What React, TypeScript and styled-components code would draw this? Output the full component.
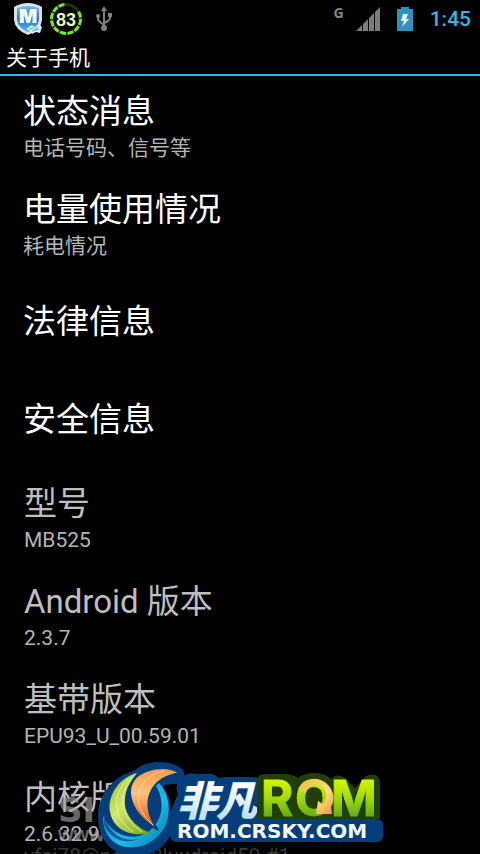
import React from 'react';
import styled, { createGlobalStyle } from 'styled-components';

const GlobalStyle = createGlobalStyle`
  *, *::before, *::after { box-sizing: border-box; }
  body {
    margin: 0;
    background: #000;
    font-family: Roboto, "Noto Sans CJK SC", sans-serif;
  }
`;

const Screen = styled.div`
  position: relative;
  display: flex;
  flex-direction: column;
  height: 100vh;
  overflow: hidden;
  background: #000;
  color: #fff;
`;

const StatusBar = styled.header`
  display: flex;
  flex: none;
  align-items: center;
  justify-content: space-between;
  height: 38px;
  padding: 0 9px 0 12px;
`;

const IconGroup = styled.div<{ $gap: number }>`
  display: flex;
  align-items: center;
  gap: ${({ $gap }) => $gap}px;
  svg { display: block; }
`;

const NetworkType = styled.span`
  height: 24px;
  color: #858585;
  font: 700 14px/12px "Open Sans", sans-serif;
`;

const Clock = styled.time`
  color: #33b5e5;
  font-size: 21px;
  font-weight: 500;
  line-height: 38px;
`;

const TitleBar = styled.h1`
  flex: none;
  height: 38px;
  margin: 0;
  padding: 0 6px;
  border-bottom: 2px solid #33b5e5;
  font-size: 21px;
  font-weight: 400;
  line-height: 40px;
`;

const List = styled.ul`
  margin: 0;
  padding: 0;
  list-style: none;
`;

const rowStyles = `
  display: flex;
  flex-direction: column;
  justify-content: center;
  width: 100%;
  min-height: 98px;
  border: 0;
  background: none;
  font-family: inherit;
  text-align: left;
`;

const ActionRow = styled.button`
  ${rowStyles}
  padding: 12px 23px 10px;
  color: #fff;
  cursor: pointer;
`;

const InfoRow = styled.div`
  ${rowStyles}
  padding: 12px 24px 10px;
  color: #bebebe;
`;

const RowTitle = styled.span`
  font-size: 33px;
  line-height: 48px;
  white-space: nowrap;
`;

const RowSummary = styled.span`
  height: 28px;
  color: #b4b4b4;
  font-size: 21px;
  line-height: 24px;
  white-space: nowrap;
`;

const KernelBuild = styled.span`
  display: block;
  color: #383838;
  line-height: 20px;
`;

const Watermark = styled.div`
  position: absolute;
  bottom: 10px;
  left: 58px;
  display: flex;
  flex-direction: column;
  color: rgba(165, 165, 165, 0.65);
  pointer-events: none;
`;

const WatermarkName = styled.span`
  font: 700 34px/28px "DejaVu Sans", sans-serif;
`;

const WatermarkSite = styled.span`
  font: 700 20px/20px "Liberation Sans", sans-serif;
`;

const Badge = styled.svg`
  position: absolute;
  bottom: 0;
  left: 94px;
  display: block;
  pointer-events: none;
`;

function ShieldIcon() {
  return (
    <svg width="32" height="34" viewBox="0 0 32 34" aria-hidden="true">
      <defs>
        <linearGradient id="shield" x1="0" y1="0" x2="0" y2="1">
          <stop offset="0" stopColor="#6db9ec" />
          <stop offset=".5" stopColor="#1f7fca" />
          <stop offset="1" stopColor="#55b2e6" />
        </linearGradient>
      </defs>
      <path d="M2 5Q9 1 16 1Q23 1 30 5V18Q29 28 16 33Q3 28 2 18Z" fill="#dce2e6" />
      <path d="M5 6Q16 2 27 6V18Q26 26 16 30Q6 26 5 18Z" fill="url(#shield)" />
      <text x="16" y="21" textAnchor="middle" fill="#fff" fontFamily="Inter" fontSize="19" fontWeight="900">M</text>
      <path d="M14 27L20 23L22 25L27 22L30 25L28 31L24 30L20 32L18 29Z" fill="#d7eefb" />
      <path d="M17 27L22 26M20 29L27 27M23 29L25 24" stroke="#56b3e0" strokeWidth="1" />
    </svg>
  );
}

function BatteryRing() {
  return (
    <svg width="34" height="34" viewBox="0 0 34 34" aria-label="83%">
      <g fill="none" strokeWidth="3">
        <circle cx="17" cy="17" r="14.5" stroke="#163809" />
        <circle
          cx="17" cy="17" r="14.5" stroke="#7be52b" pathLength="120"
          strokeDasharray="8 2 8 2 8 2 8 2 8 2 8 2 8 2 8 2 8 2 8 22"
          transform="rotate(-30 17 17)"
        />
      </g>
      <text x="17" y="24" textAnchor="middle" fill="#e2f5bd" fontFamily="Liberation Sans" fontSize="18" fontWeight="700">83</text>
    </svg>
  );
}

function UsbIcon() {
  return (
    <svg width="18" height="26" viewBox="0 0 18 26" aria-hidden="true">
      <g fill="none" stroke="#808080" strokeWidth="2">
        <path d="M9 3V22M3 10V13Q3 15 5 16L9 19M15 9V12Q15 14 13 15L9 17" />
      </g>
      <path d="M9 0L12 5H6Z" fill="#808080" />
      <circle cx="9" cy="22" r="3" fill="#808080" />
      <circle cx="3" cy="10" r="2" fill="#808080" />
      <rect x="13" y="7" width="4" height="4" fill="#808080" />
    </svg>
  );
}

function SignalIcon() {
  return (
    <svg width="24" height="24" viewBox="0 0 24 24" aria-hidden="true">
      <path d="M0 24L6 18V24ZM7 24V17L12 12V24ZM13 24V11L18 6V24ZM19 24V5L24 0V24Z" fill="#7d7d7d" />
    </svg>
  );
}

function ChargingIcon() {
  return (
    <svg width="16" height="24" viewBox="0 0 16 24" aria-hidden="true">
      <path d="M4 0H12V2H16V24H0V2H4Z" fill="#2d93bd" />
      <path d="M6 7H11L9 12H12L5 20L7 14H4Z" fill="#eef8fc" />
    </svg>
  );
}

function RomBadge() {
  return (
    <Badge width="292" height="94" viewBox="94 760 292 94" aria-label="ROM.CRSKY.COM">
      <defs>
        <linearGradient id="leaf" x1="0" y1="0" x2="1" y2="1">
          <stop offset="0" stopColor="#8eb51e" />
          <stop offset=".4" stopColor="#d6e86a" />
          <stop offset="1" stopColor="#6d9e12" />
        </linearGradient>
        <linearGradient id="flame" x1=".6" y1="0" x2=".6" y2="1">
          <stop offset="0" stopColor="#f39a45" />
          <stop offset=".4" stopColor="#ffc27c" />
          <stop offset="1" stopColor="#db4a07" />
        </linearGradient>
        <linearGradient id="sea" x1="0" y1="0" x2="1" y2="1">
          <stop offset="0" stopColor="#0876b8" />
          <stop offset=".6" stopColor="#19bde5" />
          <stop offset="1" stopColor="#0876b8" />
        </linearGradient>
        <linearGradient id="ice" x1="0" y1="780" x2="0" y2="820" gradientUnits="userSpaceOnUse">
          <stop offset=".2" stopColor="#fff" />
          <stop offset="1" stopColor="#b7def7" />
        </linearGradient>
        <linearGradient id="lime" x1="0" y1="780" x2="0" y2="817" gradientUnits="userSpaceOnUse">
          <stop offset="0" stopColor="#d3f500" />
          <stop offset=".5" stopColor="#a2db08" />
          <stop offset="1" stopColor="#5faa18" />
        </linearGradient>
        <linearGradient id="gold" x1="0" y1="0" x2="1" y2="1">
          <stop offset="0" stopColor="#e8c426" />
          <stop offset=".6" stopColor="#ffd98a" />
          <stop offset="1" stopColor="#ee982c" />
        </linearGradient>
      </defs>
      <path
        fill="#063e7c"
        d="M98 816C98 794 114 776 134 771C145 760 166 760 178 766Q186 771 184 778L176 784C168 784 162 785 163 788C170 796 171 806 170 812L178 794Q173 783 184 776Q189 772 195 774L206 774Q214 773 218 778L226 777H248Q258 776 258 786V819H376Q384 819 383 827V834Q383 842 376 842H180Q171 843 170 836C163 849 150 857 133 856C112 855 98 840 98 816Z"
      />
      <path d="M103 816C102 838 119 850 136 847C151 846 166 832 168 817C171 801 165 786 154 779V783C163 795 164 811 157 822C145 843 115 842 103 816Z" fill="url(#sea)" />
      <path d="M104 813C106 832 123 843 138 839C126 845 109 839 104 824Z" fill="#1558a0" />
      <path d="M137 773C120 777 107 795 110 812C113 828 128 838 151 833C134 827 123 813 125 798C126 787 132 780 137 773Z" fill="url(#leaf)" />
      <path d="M128 779C111 796 112 817 133 832M132 777C117 795 120 817 142 832" fill="none" stroke="#e3f198" strokeWidth="1" />
      <path d="M180 773C164 763 145 770 136 777C124 790 130 814 158 830C151 820 147 808 149 798C152 784 163 776 180 773Z" fill="url(#flame)" stroke="#063e7c" strokeWidth="2" />
      <path d="M164 771C142 775 133 794 142 812Q146 819 153 825" fill="none" stroke="#ffd49c" strokeWidth="1" />

      <text
        x="177 216" y="816" fontSize="41" fontWeight="900" fontFamily="Noto Sans CJK SC" fontStyle="italic"
        fill="url(#ice)" stroke="#063e7c" strokeWidth="10" strokeLinejoin="round" paintOrder="stroke"
      >非凡</text>
      <path d="M257 782Q257 774 265 774H284Q293 774 298 778Q304 773 315 773Q325 773 331 779Q336 773 344 777L355 788L366 776Q380 771 380 784V819H257Z" fill="#213f06" />
      <text
        x="261 295 331" y="816" fontFamily="Inter" fontSize="49" fontWeight="700"
        fill="url(#lime)" stroke="url(#lime)" strokeWidth="1" strokeLinejoin="round"
      >ROM</text>
      <path d="M298 790C302 777 318 776 326 783C335 791 335 801 331 807L332 814L316 814L318 801L323 804C328 796 327 790 321 786C314 783 307 787 306 793Z" fill="url(#gold)" />
      <rect x="171" y="820" width="212" height="22" rx="6" fill="#063e7c" />
      <text x="177" y="838" fill="#f4faff" fontFamily="DejaVu Sans" fontSize="20" fontWeight="700">ROM.CRSKY.COM</text>
    </Badge>
  );
}

const actions = [
  { title: '状态消息', summary: '电话号码、信号等' },
  { title: '电量使用情况', summary: '耗电情况' },
  { title: '法律信息' },
  { title: '安全信息' },
];

const details = [
  { title: '型号', summary: 'MB525' },
  { title: 'Android 版本', summary: '2.3.7' },
  { title: '基带版本', summary: 'EPU93_U_00.59.01' },
  { title: '内核版本', summary: '2.6.32.9', build: 'yfei78@pasc-8luxdroid59 #1' },
];

export default function App() {
  return (
    <Screen>
      <GlobalStyle />
      <StatusBar>
        <IconGroup $gap={12}>
          <IconGroup $gap={5}>
            <ShieldIcon />
            <BatteryRing />
          </IconGroup>
          <UsbIcon />
        </IconGroup>
        <IconGroup $gap={17}>
          <IconGroup $gap={12}>
            <NetworkType>G</NetworkType>
            <SignalIcon />
          </IconGroup>
          <ChargingIcon />
          <Clock>1:45</Clock>
        </IconGroup>
      </StatusBar>
      <TitleBar>关于手机</TitleBar>
      <List>
        {actions.map(({ title, summary }) => (
          <li key={title}>
            <ActionRow type="button">
              <RowTitle>{title}</RowTitle>
              {summary && <RowSummary>{summary}</RowSummary>}
            </ActionRow>
          </li>
        ))}
        {details.map(({ title, summary, build }) => (
          <li key={title}>
            <InfoRow>
              <RowTitle>{title}</RowTitle>
              <RowSummary>
                {summary}
                {build && <KernelBuild>{build}</KernelBuild>}
              </RowSummary>
            </InfoRow>
          </li>
        ))}
      </List>
      <Watermark>
        <WatermarkName>SI</WatermarkName>
        <WatermarkSite>www.</WatermarkSite>
      </Watermark>
      <RomBadge />
    </Screen>
  );
}
